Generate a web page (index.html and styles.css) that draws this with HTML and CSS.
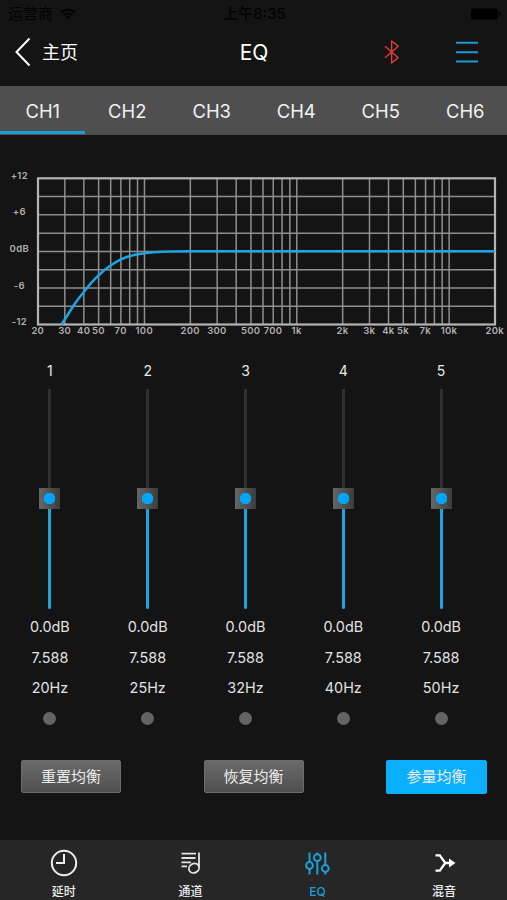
FILE: index.html
```html
<!DOCTYPE html>
<html lang="zh-CN">
<head>
  <meta charset="UTF-8" />
  <meta name="viewport" content="width=device-width, initial-scale=1.0"/>
  <title>EQ</title>
  <link rel="stylesheet" href="styles.css">
</head>
<body>
  <div class="app">
    <div class="status-bar">
      <div class="carrier">
        <span>运营商</span>
        <svg width="16" height="12" viewBox="0 0 16 12" fill="none" stroke="#030303" stroke-width="2">
          <path d="M1 4.5a10 10 0 0 1 14 0M3.6 7.3a6.3 6.3 0 0 1 8.8 0"/>
          <path d="M5.8 9a3.2 3.2 0 0 1 4.4 0L8 11.4z" fill="#030303" stroke="none"/>
        </svg>
      </div>
      <div class="time">上午8:35</div>
      <div class="battery">
        <svg width="30" height="12" viewBox="0 0 30 12" fill="#000">
          <rect x="0" y="0.5" width="27" height="11" rx="2.5"/>
          <path d="M28 4c1.8.4 1.8 3.6 0 4z"/>
        </svg>
      </div>
    </div>

    <div class="header">
      <div class="back">
        <svg width="16" height="30" viewBox="0 0 16 30" fill="none" stroke="#fff" stroke-width="2">
          <path d="M14.5 1.5L1.5 15l13 13.5"/>
        </svg>
        <span>主页</span>
      </div>
      <h1>EQ</h1>
      <div class="actions">
        <svg width="16" height="26" viewBox="0 0 16 26" fill="none" stroke="#dc3b3b" stroke-width="1.5" stroke-linejoin="round">
          <path d="M1 7.2L14.2 18.7 7.6 24V2l6.6 5.2L1 18.7"/>
        </svg>
        <svg width="22" height="22" viewBox="0 0 22 22" stroke="#1b9bd0" stroke-width="2">
          <path d="M0 1.8h22M0 11.2h22M0 20.6h22"/>
        </svg>
      </div>
    </div>

    <div class="tabs">
      <div class="tab active">CH1</div>
      <div class="tab">CH2</div>
      <div class="tab">CH3</div>
      <div class="tab">CH4</div>
      <div class="tab">CH5</div>
      <div class="tab">CH6</div>
    </div>

    <svg class="graph" width="507" height="220" viewBox="0 135 507 220">
      <g id="grid" class="grid"></g>
      <rect class="frame" x="38" y="178.3" width="457" height="146.2"/>
      <path class="curve" d="M61.5 324.5C65 319 69 313 73 306.5C77 300 80 296.5 83.5 292.3C88 286.5 93 280.5 98.5 275.5C102 272 106 268.5 110.5 265.5C114 263 117.5 261 121 259.3C129 255.5 137 254 144.5 253.2C156 251.7 170 251.2 190 251.2H495"/>
      <g id="labels" class="labels"></g>
    </svg>

    <div class="bands" id="bands"></div>

    <div class="buttons">
      <button>重置均衡</button>
      <button>恢复均衡</button>
      <button class="primary">参量均衡</button>
    </div>

    <div class="nav">
      <div class="nav-item">
        <svg width="28" height="28" viewBox="0 0 28 28" fill="none" stroke="#eee" stroke-width="2">
          <circle cx="14" cy="14" r="12.2"/>
          <path d="M14 5v9H6"/>
        </svg>
        <span>延时</span>
      </div>
      <div class="nav-item">
        <svg width="28" height="28" viewBox="0 0 28 28" fill="none" stroke="#e4e4e4" stroke-width="1.8">
          <path d="M4.5 4.7h14.5M4.5 9h14M4.5 13.3h9.5M4.5 17.4h5.5"/>
          <path d="M22 3.5v15"/>
          <ellipse cx="17" cy="19.2" rx="5.3" ry="4.5" transform="rotate(-30 17 19.2)"/>
        </svg>
        <span>通道</span>
      </div>
      <div class="nav-item active">
        <svg width="28" height="28" viewBox="0 0 28 28" fill="none" stroke="#1c9fd8" stroke-width="2">
          <path d="M6.5 3.5v9.500M6.5 20v5.500M14.300 3.500v1.700M14.300 12v13.500M22.300 3.500v12.500M22.300 23v2.500"/>
          <circle cx="6.5" cy="16.5" r="3.4"/>
          <circle cx="14.3" cy="8.7" r="3.4"/>
          <circle cx="22.3" cy="19.5" r="3.4"/>
        </svg>
        <span>EQ</span>
      </div>
      <div class="nav-item">
        <svg width="28" height="28" viewBox="0 0 28 28" fill="none" stroke="#fff" stroke-width="2.3">
          <path d="M5.5 6.3h4.3l5.500 7.700-5.500 7.700H5.500M15 14h6"/>
          <path d="M19 9.600l6.500 4.400-6.500 4.400z" fill="#fff" stroke="none"/>
        </svg>
        <span>混音</span>
      </div>
    </div>
  </div>

  <script>
    const ns = "http://www.w3.org/2000/svg";
    const left = 38, right = 495, top_ = 178.3, bottom = 324.5;

    function freqX(f) {
      return left + (right - left) / 3 * Math.log10(f / 20);
    }

    function addLine(x1, y1, x2, y2) {
      const line = document.createElementNS(ns, "line");
      line.setAttribute("x1", x1);
      line.setAttribute("y1", y1);
      line.setAttribute("x2", x2);
      line.setAttribute("y2", y2);
      document.getElementById("grid").appendChild(line);
    }

    function addLabel(text, x, y) {
      const el = document.createElementNS(ns, "text");
      el.setAttribute("x", x);
      el.setAttribute("y", y);
      el.textContent = text;
      document.getElementById("labels").appendChild(el);
    }

    // vertical lines, log scale
    for (const base of [10, 100, 1000, 10000]) {
      for (let i = 1; i < 10; i++) {
        const f = base * i;
        if (f > 20 && f < 20000) addLine(freqX(f), top_, freqX(f), bottom);
      }
    }
    for (let i = 1; i < 8; i++) {
      const y = top_ + (bottom - top_) / 8 * i;
      addLine(left, y, right, y);
    }

    ["+12", "+6", "0dB", "-6", "-12"].forEach((t, i) => addLabel(t, 19.3, 178.7 + i * 36.6));
    [20, 30, 40, 50, 70, 100, 200, 300, 500, 700, 1000, 2000, 3000, 4000, 5000, 7000, 10000, 20000].forEach(f => {
      addLabel(f >= 1000 ? f / 1000 + "k" : f, freqX(f) - 0.2, 334.3);
    });

    const freqs = [20, 25, 32, 40, 50];
    document.getElementById("bands").innerHTML = freqs.map((f, i) => `
      <div class="band">
        <div class="num">${i + 1}</div>
        <div class="slider">
          <div class="track"></div>
          <div class="thumb"></div>
          <div class="fill"></div>
        </div>
        <div class="value">0.0dB</div>
        <div class="value">7.588</div>
        <div class="value">${f}Hz</div>
        <div class="dot"></div>
      </div>`).join("");
  </script>
</body>
</html>
```
FILE: styles.css
```css
* {
  box-sizing: border-box;
}
body {
  margin: 0;
  background: #141414;
  color: #fff;
  font-family: Inter, "Noto Sans CJK SC", sans-serif;
}
svg {
  display: block;
  flex: none;
}
.app {
  width: 507px;
  height: 900px;
  display: flex;
  flex-direction: column;
  overflow: hidden;
}
.status-bar {
  height: 27px;
  padding: 0 6px 0 8px;
  display: grid;
  grid-template-columns: 1fr auto 1fr;
  align-items: center;
  color: #030303;
  font-size: 15px;
  line-height: 27px;
}
.carrier {
  display: flex;
  align-items: center;
  gap: 7px;
}
.time {
  font-weight: 500;
}
.battery {
  justify-self: end;
}
.header {
  height: 59px;
  padding: 0 29px 9px 15px;
  display: grid;
  grid-template-columns: 1fr auto 1fr;
  align-items: center;
}
.back {
  display: flex;
  align-items: center;
  gap: 11px;
  font-size: 18px;
  line-height: 30px;
}
.back span {
  padding-top: 2px;
}
h1 {
  margin: 0 0 0 15px;
  padding-top: 2px;
  font-size: 21px;
  font-weight: 400;
  line-height: 30px;
}
.actions {
  display: flex;
  justify-content: flex-end;
  align-items: center;
  gap: 56px;
}
.tabs {
  height: 49px;
  display: grid;
  grid-template-columns: repeat(6, 1fr);
  background: #4f4f4f;
}
.tab {
  height: 48px;
  padding-left: 1px;
  line-height: 51px;
  font-size: 18.4px;
  text-align: center;
  color: #f2f2f2;
}
.tab.active {
  box-shadow: inset 0 -3px #1d9ed6;
}
.grid {
  stroke: #8e8e8e;
  stroke-width: 1.5;
}
.frame {
  fill: none;
  stroke: #b4b4b4;
  stroke-width: 2.2;
}
.curve {
  fill: none;
  stroke: #1ba5e4;
  stroke-width: 2.5;
}
.labels {
  fill: #b0b0b0;
  font-size: 9.5px;
  font-weight: 600;
  letter-spacing: 0.3px;
  text-anchor: middle;
}
.bands {
  padding: 5px 17px 0 1px;
  display: grid;
  grid-template-columns: repeat(5, 1fr);
}
.band {
  display: flex;
  flex-direction: column;
  align-items: center;
}
.num {
  height: 29px;
  font-size: 14px;
  line-height: 21px;
  color: #e8e8e8;
}
.slider {
  display: flex;
  flex-direction: column;
  align-items: center;
  height: 222px;
}
.track {
  width: 3px;
  height: 99px;
  background: #303030;
}
.thumb {
  width: 21px;
  height: 21px;
  background: radial-gradient(circle, #04a5f6 5.5px, transparent 6px), linear-gradient(to right, #666, #3c3c3c);
}
.fill {
  width: 3px;
  height: 100px;
  background: #1ba5dc;
  border-radius: 0 0 2px 2px;
}
.value {
  height: 30.5px;
  line-height: 31px;
  font-size: 14.4px;
  color: #e2e2e2;
}
.dot {
  width: 13px;
  height: 13px;
  margin-top: 9px;
  border-radius: 50%;
  background: #646464;
}
.buttons {
  margin-top: 35px;
  padding: 0 20px 0 21px;
  display: flex;
  justify-content: space-between;
}
button {
  width: 100px;
  height: 33px;
  padding: 0;
  border: 1px solid #6c6c6c;
  border-radius: 2px;
  background: linear-gradient(#6a6a6a, #505050);
  color: #ececec;
  font-family: inherit;
  font-size: 15px;
  line-height: 31px;
}
button.primary {
  width: 101px;
  height: 34px;
  border-color: #0ab0ff;
  background: #0ab0ff;
}
.nav {
  height: 60px;
  margin-top: auto;
  display: grid;
  grid-template-columns: repeat(4, 1fr);
  background: #262626;
}
.nav-item {
  padding: 9px 0 0 1px;
  display: flex;
  flex-direction: column;
  align-items: center;
  font-size: 12px;
  font-weight: 500;
  line-height: 29px;
  color: #eee;
}
.nav-item.active {
  color: #1c9fd8;
}
```
